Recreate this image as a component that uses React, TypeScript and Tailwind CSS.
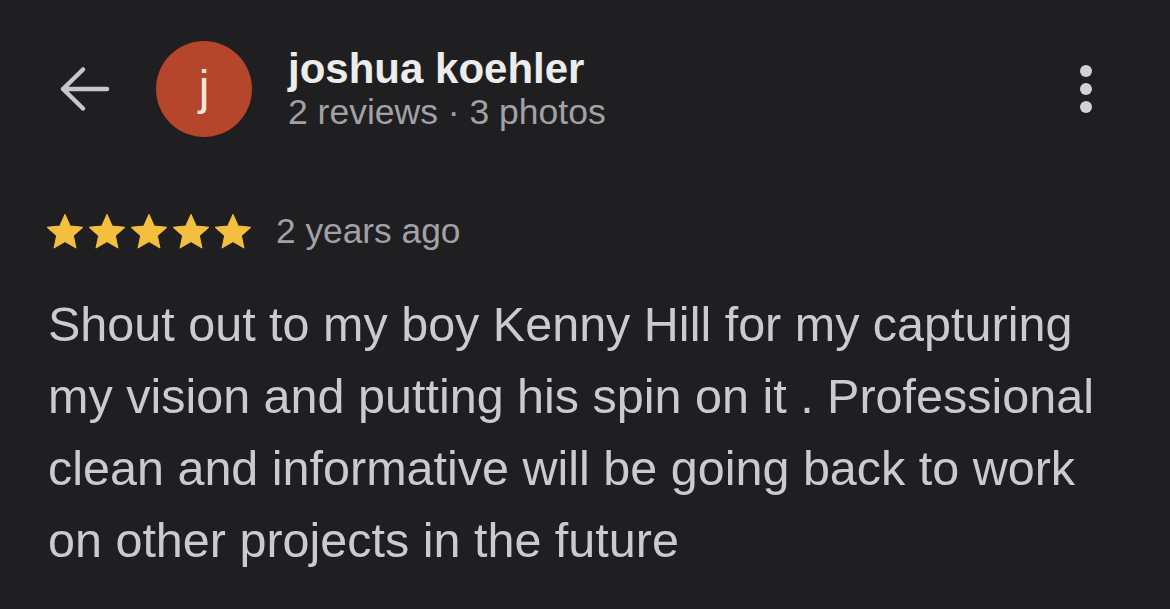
import React from "react";

const Star = () => (
  <svg width="36" height="35" viewBox="1.4 1.4 21.2 20.4">
    <path
      d="M12 1.6l3.05 6.7 7.3.8-5.45 4.95 1.52 7.2L12 17.55l-6.42 3.7 1.52-7.2L1.65 9.1l7.3-.8z"
      fill="#f4bf3f"
      stroke="#f4bf3f"
      strokeWidth="0.6"
      strokeLinejoin="round"
    />
  </svg>
);

export default function App() {
  return (
    <div
      className="w-[1170px] h-[609px] bg-[#1f1f21] overflow-hidden"
      style={{ fontFamily: '"Liberation Sans", Arial, sans-serif' }}
    >
      <div className="flex items-center pt-[41px] pl-[58px] pr-[78px]">
        <svg width="52" height="48" viewBox="0 0 52 48" className="shrink-0">
          <path
            d="M5 24H49M25 4.5L5 24L25 43.5"
            fill="none"
            stroke="#c6c7cb"
            strokeWidth="4.5"
            strokeLinecap="round"
            strokeLinejoin="round"
          />
        </svg>
        <div className="ml-[46px] w-[96px] h-[96px] rounded-full bg-[#b5462b] flex items-center justify-center shrink-0">
          <span className="text-[48px] leading-none text-[#f3e6df] mb-[2px]">j</span>
        </div>
        <div className="ml-[36px] flex flex-col">
          <span className="text-[42px] leading-[46px] font-bold text-[#ececec]">joshua koehler</span>
          <span className="text-[35.5px] leading-[40px] text-[#a2a2a6]">2 reviews · 3 photos</span>
        </div>
        <div className="ml-auto flex flex-col gap-[6px] items-center">
          <div className="w-[12px] h-[12px] rounded-full bg-[#d2d2d4]" />
          <div className="w-[12px] h-[12px] rounded-full bg-[#d2d2d4]" />
          <div className="w-[12px] h-[12px] rounded-full bg-[#d2d2d4]" />
        </div>
      </div>
      <div className="flex items-center pl-[47px] mt-[76px] h-[36px]">
        <div className="flex gap-[6px]">
          <Star />
          <Star />
          <Star />
          <Star />
          <Star />
        </div>
        <span className="ml-[25px] text-[35.3px] leading-[36px] text-[#a2a2a6]">2 years ago</span>
      </div>
      <p className="pl-[48px] mt-[39px] text-[48.5px] leading-[72px] text-[#cacbcf] whitespace-nowrap">
        Shout out to my boy Kenny Hill for my capturing
        <br />
        my vision and putting his spin on it . Professional
        <br />
        clean and informative will be going back to work
        <br />
        on other projects in the future
      </p>
    </div>
  );
}
